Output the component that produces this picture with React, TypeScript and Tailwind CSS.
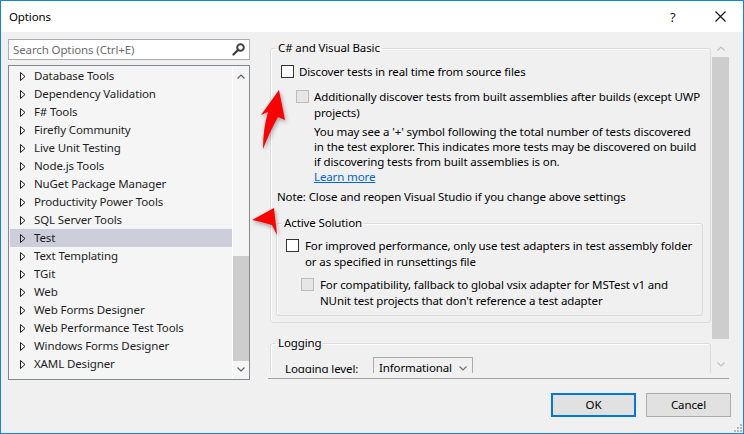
import React from "react";

const TREE = [
  "Database Tools",
  "Dependency Validation",
  "F# Tools",
  "Firefly Community",
  "Live Unit Testing",
  "Node.js Tools",
  "NuGet Package Manager",
  "Productivity Power Tools",
  "SQL Server Tools",
  "Test",
  "Text Templating",
  "TGit",
  "Web",
  "Web Forms Designer",
  "Web Performance Test Tools",
  "Windows Forms Designer",
  "XAML Designer",
];

function Expander() {
  return (
    <svg width="6" height="9" viewBox="0 0 6 9" className="shrink-0">
      <path d="M0.5 0.5 L5 4.5 L0.5 8.5 Z" fill="none" stroke="#1e1e1e" strokeWidth="1" />
    </svg>
  );
}

function Chevron({ down = false, color = "#606060" }: { down?: boolean; color?: string }) {
  return (
    <svg width="8" height="5" viewBox="0 0 8 5">
      <path
        d={down ? "M0.5 0.5 L4 4 L7.5 0.5" : "M0.5 4.5 L4 1 L7.5 4.5"}
        fill="none"
        stroke={color}
        strokeWidth="1.2"
      />
    </svg>
  );
}

function Check({ disabled = false }: { disabled?: boolean }) {
  return (
    <span
      className={`mt-[1px] size-[13px] shrink-0 border ${
        disabled ? "border-[#bcbcbc] bg-[#e6e6e6]" : "border-[#333333] bg-white"
      }`}
    />
  );
}

function TreePane() {
  return (
    <div className="flex h-[315px] border border-[#828790] bg-[#f5f5f5] p-[1px] pr-0">
      <div className="flex flex-1 flex-col">
        {TREE.map((name) => (
          <div
            key={name}
            className={`flex h-[18px] shrink-0 items-center gap-[8px] pl-[10px] ${
              name === "Test" ? "bg-[#cccedb]" : ""
            }`}
          >
            <Expander />
            <span className="leading-[18px] text-[#1e1e1e]">{name}</span>
          </div>
        ))}
      </div>
      <div className="flex w-[17px] flex-col border-l border-white">
        <div className="flex h-[17px] items-center justify-center pt-[2px]">
          <Chevron />
        </div>
        <div className="flex-1 pt-[172px] pb-[1px]">
          <div className="h-[105px] bg-[#cdcdcd]" />
        </div>
        <div className="flex h-[17px] items-center justify-center">
          <Chevron down />
        </div>
      </div>
    </div>
  );
}

function OptionsContent() {
  return (
    <div className="h-[333px] w-[444px] overflow-hidden pl-[2px] pr-[1px] whitespace-nowrap">
      <fieldset className="rounded-[3px] border border-[#dcdcdc] pr-[7px] pb-[6px] shadow-[inset_1px_1px_0_#ffffff]">
        <legend className="ml-[5px] px-[2px] leading-[16px]">C# and Visual Basic</legend>
        <label className="mt-[8px] flex gap-[5px] pl-[10px] leading-[16px]">
          <Check />
          <span>Discover tests in real time from source files</span>
        </label>
        <div className="mt-[9px] flex gap-[5px] pl-[25px] leading-[16px]">
          <Check disabled />
          <span>
            Additionally discover tests from built assemblies after builds (except UWP
            <br />
            projects)
          </span>
        </div>
        <div className="mt-[3px] pl-[43px] leading-[15px]">
          <p>
            You may see a '+' symbol following the total number of tests discovered
            <br />
            in the test explorer. This indicates more tests may be discovered on build
            <br />
            if discovering tests from built assemblies is on.
          </p>
          <a className="text-[#0066cc] underline">Learn more</a>
        </div>
        <p className="mt-[5px] pl-[6px] leading-[16px]">
          Note: Close and reopen Visual Studio if you change above settings
        </p>
        <fieldset className="mt-[10px] ml-[5px] rounded-[3px] border border-[#dcdcdc] pb-[6px] shadow-[inset_1px_1px_0_#ffffff]">
          <legend className="ml-[5px] px-[2px] leading-[16px]">Active Solution</legend>
          <div className="mt-[7px] flex gap-[6px] pl-[9px] leading-[16px]">
            <Check />
            <span>
              For improved performance, only use test adapters in test assembly folder
              <br />
              or as specified in runsettings file
            </span>
          </div>
          <div className="mt-[7px] flex gap-[6px] pl-[24px] leading-[16px]">
            <Check disabled />
            <span>
              For compatibility, fallback to global vsix adapter for MSTest v1 and
              <br />
              NUnit test projects that don't reference a test adapter
            </span>
          </div>
        </fieldset>
      </fieldset>
      <fieldset className="mt-[12px] rounded-[3px] border border-[#dcdcdc] shadow-[inset_1px_1px_0_#ffffff]">
        <legend className="ml-[5px] px-[2px] leading-[16px]">Logging</legend>
        <div className="mt-[6px] flex items-start pl-[14px]">
          <span className="w-[88px] pt-[4px] leading-[16px]">Logging level:</span>
          <div className="flex h-[22px] w-[100px] items-center justify-between border border-[#acacac] bg-[#f0f0f0] pr-[5px] pl-[5px]">
            <span className="leading-[16px]">Informational</span>
            <Chevron down color="#707070" />
          </div>
        </div>
        <div className="h-[20px]" />
      </fieldset>
    </div>
  );
}

function Arrows() {
  return (
    <svg
      width="744"
      height="434"
      viewBox="0 0 744 434"
      className="pointer-events-none absolute top-0 left-0 drop-shadow-[1px_2px_2px_rgba(0,0,0,0.35)]"
    >
      <path d="M278 89 L284 119 L277 116 Q269 130 262 148 Q262 128 267 111 L260 114 Z" fill="#ff0000" />
      <path d="M251 219 L273 207 L276 234 L271 224 Q262 221 251 219 Z" fill="#ff0000" />
    </svg>
  );
}

export default function App() {
  return (
    <div className="relative h-[434px] w-[744px] overflow-hidden border border-[#1883d7] bg-[#f0f0f0] font-['Noto_Sans',sans-serif] text-[11.5px] tracking-[-0.12px] text-black">
      <div className="flex h-[31px] items-center bg-white pl-[8px]">
        <span className="flex-1 leading-[16px]">Options</span>
        <span className="w-[10px] text-[13px] leading-[16px] text-[#222]">?</span>
        <svg width="11" height="11" viewBox="0 0 11 11" className="mr-[17px] ml-[35px]">
          <path d="M0.5 0.5 L10.5 10.5 M10.5 0.5 L0.5 10.5" stroke="#111" strokeWidth="1.1" />
        </svg>
      </div>

      <div className="flex">
        <div className="ml-[7px] w-[242px] pt-[7px]">
          <div className="flex h-[21px] items-center border border-[#abadb3] bg-white pr-[4px] pl-[4px]">
            <span className="flex-1 leading-[16px] text-[#6d6d6d]">Search Options (Ctrl+E)</span>
            <svg width="13" height="13" viewBox="0 0 13 13">
              <circle cx="8.5" cy="4.5" r="3.3" fill="none" stroke="#424242" strokeWidth="2" />
              <path d="M6 7 L1.5 11.5" stroke="#424242" strokeWidth="2.4" strokeLinecap="round" />
            </svg>
          </div>
          <div className="mt-[5px]">
            <TreePane />
          </div>
        </div>

        <div className="ml-[18px] w-[461px] pt-[8px]">
          <div className="flex border-b border-[#a0a0a0] pb-[5px]">
            <OptionsContent />
            <div className="flex h-[333px] w-[17px] flex-col">
              <div className="flex h-[17px] items-center justify-center">
                <Chevron color="#c0c0c0" />
              </div>
              <div className="h-[282px] bg-[#cdcdcd]" />
              <div className="flex-1" />
              <div className="flex h-[17px] items-center justify-center">
                <Chevron down color="#c0c0c0" />
              </div>
            </div>
          </div>
        </div>
      </div>

      <div className="mt-[13px] flex justify-end gap-[10px] pr-[12px]">
        <button className="h-[24px] w-[85px] border-2 border-[#0078d7] bg-[#e1e1e1] leading-[16px]">OK</button>
        <button className="h-[24px] w-[85px] border border-[#adadad] bg-[#e1e1e1] leading-[16px]">Cancel</button>
      </div>

      <svg width="9" height="9" viewBox="0 0 9 9" className="absolute right-[1px] bottom-[1px]">
        <rect x="7" y="1" width="2" height="2" fill="#b8b8b8" />
        <rect x="4" y="4" width="2" height="2" fill="#b8b8b8" />
        <rect x="7" y="4" width="2" height="2" fill="#b8b8b8" />
        <rect x="1" y="7" width="2" height="2" fill="#b8b8b8" />
        <rect x="4" y="7" width="2" height="2" fill="#b8b8b8" />
        <rect x="7" y="7" width="2" height="2" fill="#b8b8b8" />
      </svg>

      <Arrows />
    </div>
  );
}
